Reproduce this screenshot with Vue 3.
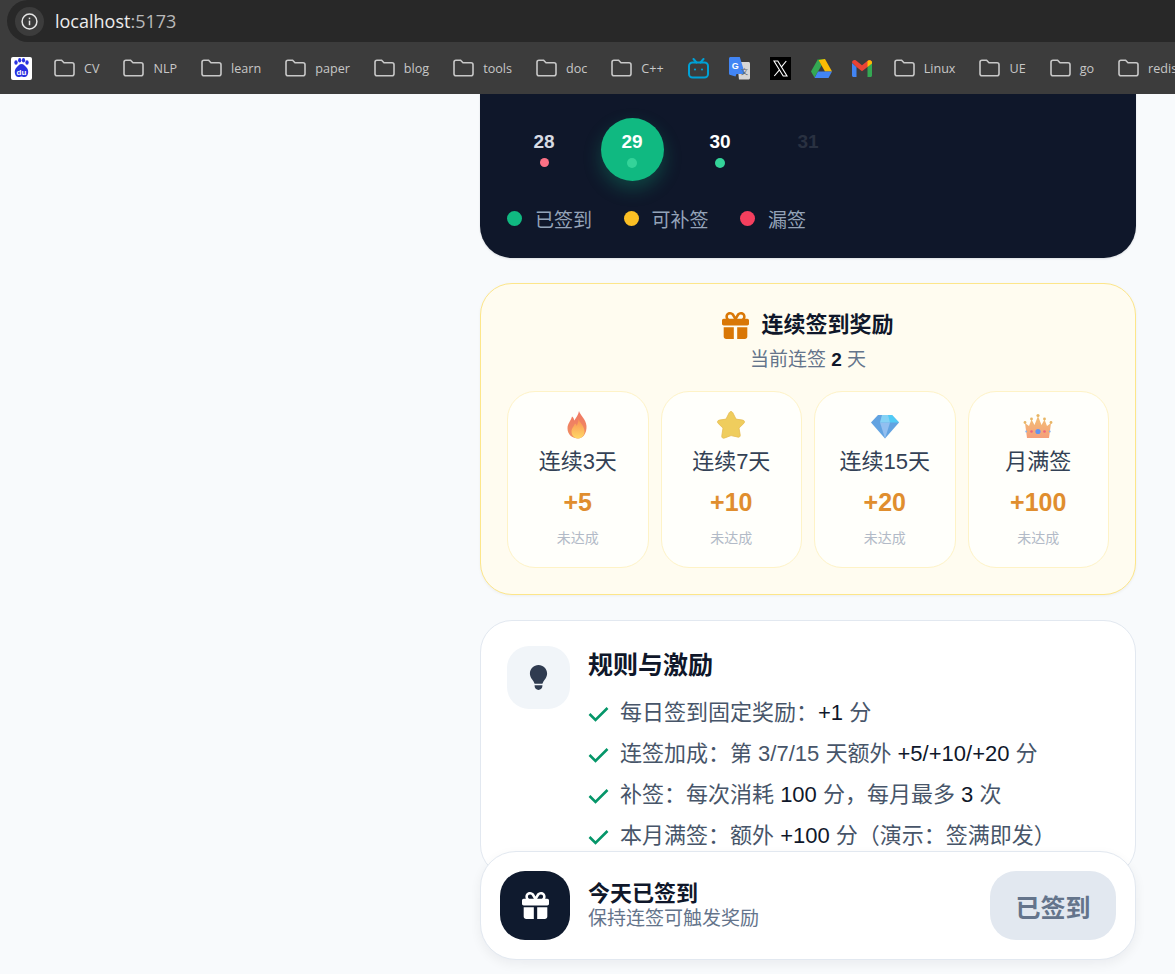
<script setup>
const gift = 'M190.5 68.8L225.3 128H224 152c-22.1 0-40-17.9-40-40s17.9-40 40-40h2.2c14.9 0 28.8 7.9 36.3 20.8zM64 88c0 14.4 3.5 28 9.6 40H32c-17.7 0-32 14.3-32 32v64c0 17.7 14.3 32 32 32H480c17.7 0 32-14.3 32-32V160c0-17.7-14.3-32-32-32H438.4c6.1-12 9.6-25.6 9.6-40c0-48.6-39.4-88-88-88h-2.2c-31.9 0-61.5 16.9-77.7 44.4L256 85.5l-24.1-41C215.7 16.9 186.1 0 154.2 0H152C103.4 0 64 39.4 64 88zm336 0c0 22.1-17.9 40-40 40H288h-1.3l34.8-59.2C329.1 55.9 342.9 48 357.8 48H360c22.1 0 40 17.9 40 40zM32 288V464c0 26.5 21.5 48 48 48H224V288H32zM288 512H432c26.5 0 48-21.5 48-48V288H288V512z'

const bookmarks = [
  { icon: 'baidu' },
  { label: 'CV' }, { label: 'NLP' }, { label: 'learn' }, { label: 'paper' },
  { label: 'blog' }, { label: 'tools' }, { label: 'doc' }, { label: 'C++' },
  { icon: 'bili' }, { icon: 'translate' }, { icon: 'x' }, { icon: 'drive' }, { icon: 'gmail' },
  { label: 'Linux' }, { label: 'UE' }, { label: 'go' }, { label: 'redis' }
]

const days = [
  { n: 28, state: 'missed' },
  { n: 29, state: 'today' },
  { n: 30, state: 'done' },
  { n: 31, state: 'future' }
]

const legend = [
  { text: '已签到', color: '#10b981' },
  { text: '可补签', color: '#fbbf24' },
  { text: '漏签', color: '#f43f5e' }
]

const rewards = [
  { icon: 'flame', label: '连续3天', value: '+5' },
  { icon: 'star', label: '连续7天', value: '+10' },
  { icon: 'gem', label: '连续15天', value: '+20' },
  { icon: 'crown', label: '月满签', value: '+100' }
]
</script>

<template>
  <div class="window">
    <header class="chrome">
      <div class="address">
        <span class="info">
          <svg width="17" height="17" viewBox="0 0 17 17" fill="none" stroke="#e6e6e6" stroke-width="1.5">
            <circle cx="8.5" cy="8.5" r="7.4" />
            <path d="M8.5 7.6v4.6" />
            <path d="M8.5 4.6v1.6" />
          </svg>
        </span>
        <span class="url">localhost<em>:5173</em></span>
      </div>
      <nav class="bookmarks">
        <div v-for="(b, i) in bookmarks" :key="i" class="bookmark" :class="{ folder: b.label, first: b.icon === 'bili' }">
          <template v-if="b.label">
            <svg width="21" height="18" viewBox="0 0 21 18" fill="none" stroke="#c8c8c8" stroke-width="1.6">
              <path d="M1 3.2C1 2 1.9 1.2 3 1.2h4.6l2.4 2.6h8c1.1 0 2 .9 2 2v8.9c0 1.1-.9 2-2 2H3c-1.100 0-2-.9-2-2z" />
            </svg>
            <span>{{ b.label }}</span>
          </template>
          <svg v-else-if="b.icon === 'baidu'" width="21" height="23" viewBox="0 0 21 23">
            <rect width="21" height="23" rx="2" fill="#fff" />
            <g fill="#2932e1">
              <ellipse cx="5" cy="5.500" rx="1.700" ry="2.300" />
              <ellipse cx="8.700" cy="3.200" rx="1.600" ry="2.200" />
              <ellipse cx="12.500" cy="3.200" rx="1.600" ry="2.200" />
              <ellipse cx="16" cy="5.500" rx="1.700" ry="2.300" />
              <path d="M10.500 7c2.500 0 3.200 2 5 3.500 2.500 2 2.500 8.500-1.500 9.500-2 .4-2.500-.4-3.500-.4s-1.500.8-3.500.4c-4-1-4-7.500-1.500-9.500C7.300 9 8 7 10.500 7z" />
            </g>
            <text x="10.500" y="18" text-anchor="middle" font-size="8" font-weight="700" fill="#fff" font-family="Liberation Sans, sans-serif">du</text>
          </svg>
          <svg v-else-if="b.icon === 'bili'" width="21" height="21" viewBox="0 0 21 21" fill="none" stroke="#00a1d6" stroke-width="2">
            <rect x="1" y="4.500" width="19" height="15" rx="3.500" />
            <path d="M5.500 1l3 3.500M15.500 1l-3 3.500" stroke-linecap="round" />
            <circle cx="7" cy="11.500" r="1.100" fill="#00a1d6" stroke="none" />
            <circle cx="14" cy="11.500" r="1.100" fill="#00a1d6" stroke="none" />
          </svg>
          <svg v-else-if="b.icon === 'translate'" width="21" height="23" viewBox="0 0 21 23">
            <path d="M8 5h11.500c.8 0 1.500.7 1.500 1.500V21c0 .8-.7 1.500-1.500 1.500H10z" fill="#d6d6d6" />
            <path d="M1.500 0h9.300L16 17H7.500l-1 2.500-5-1.500C.700 18 0 17.300 0 16.500V1.500C0 .7.700 0 1.500 0z" fill="#4285f4" />
            <text x="6.300" y="12" text-anchor="middle" font-size="9" font-weight="700" fill="#fff" font-family="Liberation Sans, sans-serif">G</text>
            <text x="15.500" y="17" text-anchor="middle" font-size="7" fill="#666" font-family="Noto Sans CJK SC, sans-serif">文</text>
          </svg>
          <svg v-else-if="b.icon === 'x'" width="21" height="23" viewBox="0 0 21 23">
            <rect width="21" height="23" fill="#000" />
            <path d="M4 4h3.800l9.200 15h-3.800zM16.300 4l-5.200 6.400M9.500 12.800L4.300 19" fill="none" stroke="#fff" stroke-width="1.100" />
          </svg>
          <svg v-else-if="b.icon === 'drive'" width="21" height="19" viewBox="0 0 21 19">
            <path d="M7 0h7l-3.500 6.500z" fill="#188038" />
            <path d="M7 0L0 12.500l3.500 6L10.500 6.500z" fill="#34a853" />
            <path d="M14 0l7 12.500h-7L7.500 1z" fill="#fbbc04" />
            <path d="M3.500 19l3.500-6.500h14L17.500 19z" fill="#4285f4" />
          </svg>
          <svg v-else-if="b.icon === 'gmail'" width="20" height="17" viewBox="0 0 20 17">
            <path d="M0 3v12.500c0 .8.700 1.500 1.500 1.500H4.500V7z" fill="#4285f4" />
            <path d="M15.500 7v10h3c.8 0 1.500-.7 1.500-1.500V3z" fill="#34a853" />
            <path d="M0 2.500C0 .5 2.300-.6 4 .6L10 5.200 16 .6c1.700-1.200 4-.1 4 1.900L15.500 7 10 11.200 4.500 7z" fill="#ea4335" />
            <path d="M15.500 1v6L20 3.500V2.500C20 .5 17.500-.6 15.500 1z" fill="#fbbc04" />
          </svg>
        </div>
      </nav>
    </header>

    <main class="page">
      <div class="column">
        <section class="calendar">
          <div class="days">
            <div v-for="d in days" :key="d.n" class="day" :class="d.state">
              <span class="num">{{ d.n }}</span>
              <i class="mark"></i>
            </div>
          </div>
          <div class="legend">
            <span v-for="l in legend" :key="l.text" class="legend-item">
              <i :style="{ background: l.color }"></i>{{ l.text }}
            </span>
          </div>
        </section>

        <section class="streak">
          <h2>
            <svg width="27" height="27" viewBox="0 0 512 512" fill="#d97706"><path :d="gift" /></svg>
            连续签到奖励
          </h2>
          <p class="streak-sub">当前连签 <b>2</b> 天</p>
          <div class="tiles">
            <div v-for="r in rewards" :key="r.label" class="tile">
              <svg class="emoji" width="30" height="30" viewBox="0 0 30 30">
                <defs>
                  <linearGradient id="flameOuter" x1="0" y1="0" x2="0" y2="1">
                    <stop offset="0" stop-color="#f0705a" />
                    <stop offset="1" stop-color="#f08a5a" />
                  </linearGradient>
                  <linearGradient id="flameInner" x1="0" y1="0" x2="0" y2="1">
                    <stop offset="0" stop-color="#f98a4b" />
                    <stop offset="1" stop-color="#ffd75e" />
                  </linearGradient>
                  <linearGradient id="crownFill" x1="0" y1="0" x2="0" y2="1">
                    <stop offset="0" stop-color="#f3bd6d" />
                    <stop offset="1" stop-color="#f59a74" />
                  </linearGradient>
                </defs>
                <template v-if="r.icon === 'flame'">
                  <path d="M16 1c1 4 7 8 7.500 15 .4 7-3.500 12.500-8.500 12.500S4.500 25 4.500 18.500C4.500 13 8 11 9 6.500c1.500 1 2 2.500 2.300 4C12.800 8 15.500 5 16 1z" fill="url(#flameOuter)" />
                  <path d="M15.500 9c1 3.500 6 7 6 12.500 0 4-3 7-6.500 7s-6.500-3-6.500-7c0-3.500 2.500-5 3.500-8 1 .5 1.500 1.500 1.700 2.500C14.500 14 15.500 11.500 15.500 9z" fill="url(#flameInner)" />
                </template>
                <template v-else-if="r.icon === 'star'">
                  <path d="M15 1.500c.9 0 1.500.6 2 1.600l3 6 6.600 1c2 .3 2.500 2 1.200 3.300l-4.800 4.700 1.200 6.700c.3 2-1.200 3-3 2.100L15 25.600l-6.200 2.300c-1.800.900-3.300-.1-3-2.100L7 18.100l-4.800-4.700C.900 12.100 1.400 10.400 3.400 10.100l6.600-1 3-6c.5-1 1.100-1.600 2-1.600z" fill="#efcb55" stroke="#e6b949" stroke-width=".8" />
                </template>
                <template v-else-if="r.icon === 'gem'">
                  <path d="M8 5h14l7 7.500L15 28.500 1 12.500z" fill="#5a9fe0" />
                  <path d="M17 5h5l7 7.500H20z" fill="#48c9f5" />
                  <path d="M10 12.500h10L15 28.500z" fill="#8dbcf0" />
                  <path d="M12 5h6l2 7.500H10z" fill="#7fd0f5" />
                </template>
                <template v-else>
                  <path d="M2 13l4 3 2.500-6.500 3 5.500L15 6l3.500 9 3-5.500L24 16l4-3-2 15H4z" fill="url(#crownFill)" />
                  <circle cx="2" cy="12.500" r="1.400" fill="#e7b35e" />
                  <circle cx="28" cy="12.500" r="1.400" fill="#e7b35e" />
                  <circle cx="8.500" cy="9" r="1.400" fill="#e7b35e" />
                  <circle cx="21.500" cy="9" r="1.400" fill="#e7b35e" />
                  <circle cx="15" cy="5.500" r="1.600" fill="#e7b35e" />
                  <circle cx="15" cy="21.500" r="2.600" fill="#5b8ff0" />
                  <circle cx="8.500" cy="21.500" r="1.300" fill="#ef5a78" />
                  <circle cx="21.500" cy="21.500" r="1.300" fill="#ef5a78" />
                  <circle cx="3.200" cy="21.500" r=".9" fill="#7fb0f0" />
                  <circle cx="26.800" cy="21.500" r=".9" fill="#7fb0f0" />
                </template>
              </svg>
              <span class="tile-label">{{ r.label }}</span>
              <span class="tile-value">{{ r.value }}</span>
              <span class="tile-status">未达成</span>
            </div>
          </div>
        </section>

        <section class="rules">
          <div class="bulb">
            <svg width="19" height="25" viewBox="0 0 384 512" fill="#2f3b50">
              <path d="M272 384c9.600-31.900 29.500-59.100 49.200-86.200c5.200-7.100 10.400-14.200 15.400-21.400c19.800-28.500 31.400-63 31.400-100.300C368 78.800 289.200 0 192 0S16 78.800 16 176c0 37.300 11.600 71.900 31.400 100.300c5 7.200 10.200 14.300 15.400 21.400c19.800 27.100 39.700 54.400 49.200 86.200H272zM192 512c44.200 0 80-35.800 80-80V416H112v16c0 44.200 35.800 80 80 80z" />
            </svg>
          </div>
          <div class="rules-body">
            <h3>规则与激励</h3>
            <ul>
              <li>
                <svg class="check" width="21" height="16" viewBox="0 0 21 16"><path d="M1.500 8l6 6L19.500 2" /></svg>
                <span>每日签到固定奖励：<b>+1</b> 分</span>
              </li>
              <li>
                <svg class="check" width="21" height="16" viewBox="0 0 21 16"><path d="M1.500 8l6 6L19.500 2" /></svg>
                <span>连签加成：第 3/7/15 天额外 <b>+5/+10/+20</b> 分</span>
              </li>
              <li>
                <svg class="check" width="21" height="16" viewBox="0 0 21 16"><path d="M1.500 8l6 6L19.500 2" /></svg>
                <span>补签：每次消耗 <b>100</b> 分，每月最多 <b>3</b> 次</span>
              </li>
              <li>
                <svg class="check" width="21" height="16" viewBox="0 0 21 16"><path d="M1.500 8l6 6L19.500 2" /></svg>
                <span>本月满签：额外 <b>+100</b> 分（演示：签满即发）</span>
              </li>
            </ul>
          </div>
        </section>

        <div class="action-bar">
          <div class="action-icon">
            <svg width="27" height="27" viewBox="0 0 512 512" fill="#fff"><path :d="gift" /></svg>
          </div>
          <div class="action-text">
            <strong>今天已签到</strong>
            <span>保持连签可触发奖励</span>
          </div>
          <button class="action-btn" disabled>已签到</button>
        </div>
      </div>
    </main>
  </div>
</template>

<style scoped>
.window {
  height: 974px;
  display: flex;
  flex-direction: column;
  overflow: hidden;
  background: #f8fafc;
  font-family: "Liberation Sans", "Noto Sans CJK SC", sans-serif;
}

.chrome {
  flex: none;
  background: #3c3c3c;
}

.address {
  height: 42px;
  margin-left: 7px;
  padding-left: 8px;
  display: flex;
  align-items: center;
  gap: 11px;
  background: #282828;
  border-radius: 21px 0 0 21px;
}

.info {
  width: 29px;
  height: 29px;
  display: flex;
  align-items: center;
  justify-content: center;
  border-radius: 50%;
  background: #3c3c3c;
}

.url {
  font-family: "Open Sans", sans-serif;
  font-size: 18px;
  color: #ececec;
}

.url em {
  font-style: normal;
  color: #b9b9b9;
}

.bookmarks {
  height: 52px;
  padding-left: 11px;
  display: flex;
  align-items: center;
  gap: 20px;
  white-space: nowrap;
  overflow: hidden;
}

.bookmark {
  display: flex;
  align-items: center;
  gap: 9px;
  flex: none;
  font-family: "Open Sans", sans-serif;
  font-size: 12.6px;
  color: #c7c7c7;
}

.bookmark.folder {
  padding: 0 2px;
}

.bookmark.first {
  margin-left: 2px;
}

.page {
  flex: 1;
  min-height: 0;
  overflow: hidden;
}

.column {
  position: relative;
  width: 656px;
  height: 100%;
  margin-left: 480px;
  display: flex;
  flex-direction: column;
  gap: 25px;
}

.calendar {
  margin-top: -40px;
  padding: 64px 27px 27px;
  background: #0f172a;
  border-radius: 32px;
  box-shadow: 0 1px 2px rgba(15, 23, 42, 0.12);
}

.days {
  display: grid;
  grid-template-columns: repeat(7, 74px);
  gap: 14px;
}

.day {
  position: relative;
  width: 63px;
  height: 63px;
  justify-self: center;
  display: flex;
  flex-direction: column;
  align-items: center;
  padding-top: 13px;
  box-sizing: border-box;
  border-radius: 50%;
}

.num {
  font-size: 19px;
  line-height: 22px;
  font-weight: 700;
  color: #fff;
}

.mark {
  width: 9px;
  height: 9px;
  margin-top: 5px;
  border-radius: 50%;
}

.missed .num { color: #d7dbe3; }
.missed .mark { background: #fb7185; }
.today { background: #10b981; box-shadow: 0 8px 18px rgba(16, 185, 129, 0.28); }
.today .mark { width: 10px; height: 10px; background: #34d399; }
.done .mark { width: 10px; height: 10px; background: #34d399; }
.future .num { color: #293141; }

.legend {
  margin-top: 24px;
  height: 26px;
  display: flex;
  align-items: center;
  gap: 31.5px;
  font-size: 19px;
  color: #94a3b8;
}

.legend-item {
  display: flex;
  align-items: center;
  gap: 13px;
}

.legend-item i {
  width: 15px;
  height: 15px;
  border-radius: 50%;
}

.streak {
  flex: none;
  padding: 26px;
  background: #fffcf0;
  border: 1px solid #fde68a;
  border-radius: 32px;
  text-align: center;
  box-shadow: 0 1px 3px rgba(15, 23, 42, 0.05);
}

.streak h2 {
  margin: 0;
  display: flex;
  align-items: center;
  justify-content: center;
  gap: 12px;
  font-size: 22px;
  line-height: 30px;
  font-weight: 700;
  color: #0f172a;
}

.streak-sub {
  margin: 6px 0 17px;
  font-size: 19px;
  line-height: 28px;
  color: #64748b;
}

.streak-sub b {
  color: #0f172a;
}

.tiles {
  display: grid;
  grid-template-columns: repeat(4, 1fr);
  gap: 12px;
}

.tile {
  height: 177px;
  box-sizing: border-box;
  padding-top: 18px;
  display: flex;
  flex-direction: column;
  align-items: center;
  background: #fffffb;
  border: 1px solid #fef3c7;
  border-radius: 28px;
}

.emoji {
  opacity: 0.95;
}

.tile-label {
  margin-top: 8px;
  font-size: 22px;
  line-height: 28px;
  color: #334155;
}

.tile-value {
  margin-top: 11px;
  font-size: 25px;
  line-height: 30px;
  font-weight: 700;
  color: #e08e2e;
}

.tile-status {
  margin-top: 11px;
  font-size: 14px;
  line-height: 20px;
  color: #b2bac7;
}

.rules {
  flex: none;
  padding: 25px 26px;
  display: flex;
  gap: 18px;
  background: #fff;
  border: 1px solid #e2e8f0;
  border-radius: 32px;
}

.bulb {
  width: 63px;
  height: 63px;
  flex: none;
  display: flex;
  align-items: center;
  justify-content: center;
  background: #f1f5f9;
  border-radius: 22px;
}

.rules-body h3 {
  margin: 0;
  font-size: 25px;
  line-height: 38px;
  font-weight: 700;
  color: #0f172a;
}

.rules-body ul {
  margin: 13px 0 0;
  padding: 0;
  list-style: none;
  display: flex;
  flex-direction: column;
  gap: 10px;
}

.rules-body li {
  display: flex;
  align-items: center;
  gap: 11px;
  font-size: 22px;
  line-height: 31px;
  color: #475569;
}

.rules-body li b {
  font-weight: 400;
  color: #0f172a;
}

.check {
  flex: none;
  margin-top: 3px;
  fill: none;
  stroke: #059669;
  stroke-width: 2.6;
}

.action-bar {
  position: absolute;
  left: 0;
  right: 0;
  bottom: 14px;
  height: 109px;
  box-sizing: border-box;
  padding: 0 19px;
  display: flex;
  align-items: center;
  gap: 18px;
  background: #fff;
  border: 1px solid #e2e8f0;
  border-radius: 36px;
  box-shadow: 0 4px 12px rgba(15, 23, 42, 0.06);
}

.action-icon {
  width: 70px;
  height: 69px;
  flex: none;
  display: flex;
  align-items: center;
  justify-content: center;
  background: #0f1a2e;
  border-radius: 25px;
}

.action-text {
  flex: 1;
  display: flex;
  flex-direction: column;
}

.action-text strong {
  font-size: 22px;
  line-height: 25px;
  color: #0f172a;
}

.action-text span {
  font-size: 19px;
  line-height: 25px;
  color: #64748b;
}

.action-btn {
  width: 126px;
  height: 69px;
  flex: none;
  border: 0;
  border-radius: 26px;
  background: #e2e8f0;
  font-family: inherit;
  font-size: 25px;
  font-weight: 700;
  color: #64748b;
}
</style>

<style>
html, body {
  margin: 0;
  overflow: hidden;
}
</style>
